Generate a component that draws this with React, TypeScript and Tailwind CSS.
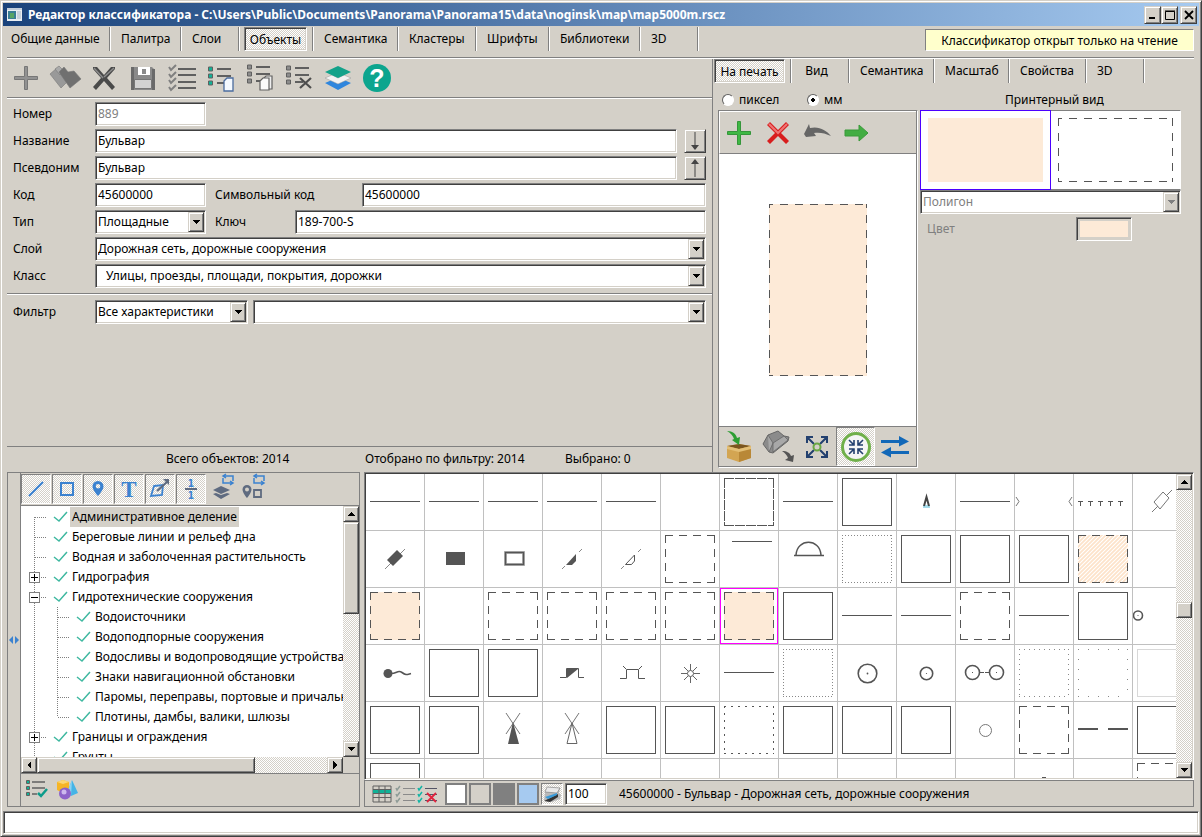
import { useState } from 'react';
import type { ReactNode } from 'react';
import clsx from 'clsx';

const SUNKEN =
  'border border-t-[#808080] border-l-[#808080] border-b-white border-r-white shadow-[inset_1px_1px_0_#404040,inset_-1px_-1px_0_#d4d0c8]';
const RAISED =
  'border border-t-[#d4d0c8] border-l-[#d4d0c8] border-b-[#404040] border-r-[#404040] shadow-[inset_1px_1px_0_#fff,inset_-1px_-1px_0_#808080] bg-[#d4d0c8]';
const HATCH = 'bg-[repeating-conic-gradient(#fff_0_25%,#d4d0c8_0_50%)] bg-[length:2px_2px]';
const PRESSED = `border border-t-[#808080] border-l-[#808080] border-b-white border-r-white ${HATCH}`;

/* ---------- shared controls ---------- */

function TextField({ id, value, className, disabled }: { id: string; value: string; className?: string; disabled?: boolean }) {
  return (
    <div className={clsx('h-6 bg-white flex', SUNKEN, className)}>
      <input
        id={id}
        type="text"
        defaultValue={value}
        disabled={disabled}
        className="w-full min-w-0 bg-transparent px-0.5 outline-none disabled:text-[#808080]"
      />
    </div>
  );
}

function Arrow({ dir, color = '#000' }: { dir: 'up' | 'down' | 'left' | 'right'; color?: string }) {
  const points = {
    up: '0,6 8,6 4,2',
    down: '0,2 8,2 4,6',
    left: '6,0 6,8 2,4',
    right: '2,0 2,8 6,4',
  };
  return (
    <svg width="8" height="8" viewBox="0 0 8 8" shapeRendering="crispEdges">
      <polygon points={points[dir]} fill={color} />
    </svg>
  );
}

type SelectProps = { id: string; label?: string; options: string[]; className?: string; disabled?: boolean; indent?: boolean };

function SelectField({ id, label, options, className, disabled, indent }: SelectProps) {
  return (
    <div className={clsx('relative h-6 bg-white flex', SUNKEN, className)}>
      <select
        id={id}
        aria-label={label}
        disabled={disabled}
        className={clsx(
          'appearance-none w-full min-w-0 bg-transparent pr-5 outline-none disabled:text-[#808080] disabled:opacity-100',
          indent ? 'pl-2.5' : 'pl-0.5'
        )}
      >
        {options.map((o) => (
          <option key={o}>{o}</option>
        ))}
      </select>
      <span className={clsx('absolute right-px top-px bottom-px w-4 flex items-center justify-center pointer-events-none', RAISED)}>
        <Arrow dir="down" color={disabled ? '#808080' : '#000'} />
      </span>
    </div>
  );
}

function ScrollButton({ dir }: { dir: 'up' | 'down' | 'left' | 'right' }) {
  return (
    <button type="button" aria-label={dir} className={clsx('w-4 h-4 shrink-0 flex items-center justify-center', RAISED)}>
      <Arrow dir={dir} />
    </button>
  );
}

function IconButton({ label, children, pressed, className }: { label: string; children: ReactNode; pressed?: boolean; className?: string }) {
  return (
    <button
      type="button"
      aria-label={label}
      className={clsx('flex items-center justify-center shrink-0', pressed && PRESSED, className)}
    >
      {children}
    </button>
  );
}

type Tab = { name: string; width: string; centered?: boolean };

function TabBar({ tabs, active, onSelect }: { tabs: Tab[]; active: string; onSelect: (t: string) => void }) {
  return (
    <div className="flex h-6">
      {tabs.map((tab, i) => (
        <div
          key={tab.name}
          className={clsx('flex shrink-0 border-r border-r-white shadow-[inset_-1px_0_0_#808080]', tab.width)}
        >
          {tab.name === active ? (
            <button
              type="button"
              className={clsx('mr-1.5 flex-1 text-center whitespace-nowrap pt-px', i > 0 ? 'ml-1' : 'ml-px', SUNKEN, HATCH)}
            >
              {tab.name}
            </button>
          ) : (
            <button
              type="button"
              onClick={() => onSelect(tab.name)}
              className={clsx('flex-1 whitespace-nowrap', tab.centered ? 'text-center pr-2' : 'text-left', !tab.centered && (i > 0 ? 'pl-2.5' : 'pl-2'))}
            >
              {tab.name}
            </button>
          )}
        </div>
      ))}
    </div>
  );
}

const Divider = () => <div className="h-0.5 shrink-0 border-t border-t-[#808080] border-b border-b-white" />;

/* ---------- toolbar icons ---------- */

const ListRows = ({ color }: { color: string }) => (
  <g>
    <path d="M13 5h14M13 12h14M13 19h8" stroke="#606060" strokeWidth="2" />
    <g fill={color} stroke="#606060" strokeWidth="1">
      <path d="M4.500 3h4v4h-4zM4.500 10h4v4h-4zM4.500 17h4v4h-4z" />
    </g>
  </g>
);

const mainIcons: { label: string; icon: ReactNode }[] = [
  {
    label: 'Добавить',
    icon: <path d="M14.500 4.500h3v10h10v3h-10v10h-3v-10h-10v-3h10z" fill="#929292" stroke="#777" />,
  },
  {
    label: 'Копировать',
    icon: (
      <g stroke="#777" strokeWidth=".6">
        <path d="M1 12l7-6 10 14-6 6z" fill="#999" />
        <path d="M6 7l4-3 4 4-3 5z" fill="#aaa" />
        <path d="M10 10l5-5 4 5 6-1 7 8-11 9z" fill="#707070" />
      </g>
    ),
  },
  {
    label: 'Удалить',
    icon: (
      <g>
        <path d="M5 5l4 0 7 8 7-8 4 0 0 2-8 9 8 9-3 3-8-9-8 9-3-3 8-9-8-9z" fill="#4a4a4a" />
        <path d="M6 6l9 10M26 6L16 15" stroke="#8b8b8b" strokeWidth="1.500" />
      </g>
    ),
  },
  {
    label: 'Сохранить',
    icon: (
      <g>
        <path d="M4 5h21l3 3v20H4z" fill="#8a8a8a" />
        <path d="M4 5h3v23H4zM25 7h3v21h-3z" fill="#6a6a6a" />
        <path d="M11 5h12v8H11z" fill="#fff" />
        <path d="M15 7h4v5h-4z" fill="#8a8a8a" />
        <path d="M7.500 17.500h17v9h-17z" fill="#d2d2d2" stroke="#777" />
      </g>
    ),
  },
  {
    label: 'Отметить все',
    icon: (
      <g fill="none">
        <path d="M12 7h18M12 13h18M12 20h18M12 26h18" stroke="#606060" strokeWidth="1.800" />
        <path d="M3 5l2 3 5-5M3 12l2 3 5-5M3 18l2 3 5-5M3 25l2 3 5-5" stroke="#808080" strokeWidth="2" />
      </g>
    ),
  },
  {
    label: 'Копировать список',
    icon: (
      <g transform="translate(-1 2)">
        <ListRows color="#10b297" />
        <path d="M20 17l3-3h6v13h-9z" fill="#f4f9ff" stroke="#4b6c9e" strokeWidth="1.300" />
      </g>
    ),
  },
  {
    label: 'Вставить список',
    icon: (
      <g transform="translate(-1 0)">
        <ListRows color="#8d8d8d" />
        <path d="M20 17l3-3h6v13h-9z" fill="#eee" stroke="#606060" strokeWidth="1.200" />
        <path d="M17 19l3-3h6v12h-9z" fill="#fafafa" stroke="#606060" strokeWidth="1.200" />
      </g>
    ),
  },
  {
    label: 'Удалить из списка',
    icon: (
      <g transform="translate(-1 1)">
        <ListRows color="#8d8d8d" />
        <path d="M18 15l11 10M29 15L18 25" stroke="#4d4d4d" strokeWidth="2.200" />
      </g>
    ),
  },
  {
    label: 'Слои',
    icon: (
      <g>
        <path d="M3 21l7-3 6 3 6-3 7 3-13 7z" fill="#2f86dd" />
        <path d="M3 16l7-3 6 3 6-3 7 3-13 6z" fill="#f2f2f2" stroke="#999" strokeWidth=".5" />
        <path d="M3 10l13-6 13 6-13 6z" fill="#13a28a" />
      </g>
    ),
  },
  {
    label: 'Справка',
    icon: (
      <g>
        <circle cx="16" cy="16" r="14" fill="#0ca58e" />
        <text x="16" y="25" textAnchor="middle" fill="#fff" fontSize="25" fontWeight="700" fontFamily="Liberation Sans, sans-serif">
          ?
        </text>
      </g>
    ),
  },
];

const previewTop: { label: string; icon: ReactNode }[] = [
  {
    label: 'Добавить элемент',
    icon: <path d="M14.500 4.500h3v10h10v3h-10v10h-3v-10h-10v-3h10z" fill="#3fb844" stroke="#35963a" />,
  },
  {
    label: 'Удалить элемент',
    icon: (
      <g>
        <path d="M5 8l3-3 8 8 8-8 3 3-8 8 8 8-3 3-8-8-8 8-3-3 8-8z" fill="#d81e1e" />
        <path d="M7 7l9 9 9-9" stroke="#ef7474" strokeWidth="2" fill="none" />
      </g>
    ),
  },
  {
    label: 'Отменить',
    icon: <path d="M3 17l5-10 1 4c9-2 16 2 21 8-6-3-12-4-17-3l2 3-10 1z" fill="#666" />,
  },
  {
    label: 'Вперёд',
    icon: <path d="M5 13h14V8l9 8-9 8v-5H5z" fill="#43ad43" stroke="#3a9a3a" />,
  },
];

const previewBottom: { label: string; icon: ReactNode; pressed?: boolean }[] = [
  {
    label: 'Загрузить',
    icon: (
      <g>
        <path d="M4 15l12-2 12 2v12l-12 4-12-4z" fill="#d3a552" />
        <path d="M4 15l12-2 12 2-12 3z" fill="#7a5520" />
        <path d="M16 18l12-3v12l-12 4z" fill="#b98837" />
        <path d="M4 15l12 3v3L4 18zM28 15l-12 3v3l12-3z" fill="#e3bf76" />
        <path d="M4 0c6 0 9 3 10 7l3-1-1 8-7-5 2-1C10 5 8 2 4 0z" fill="#2d9e33" />
      </g>
    ),
  },
  {
    label: 'Выгрузить',
    icon: (
      <g>
        <path d="M1 13l5-9 10-4 6 5 5 1-1 4-15 12-4-1z" fill="#8b8b8b" stroke="#666" />
        <path d="M6 4l5 8-4 9M11 12L22 5l4 4-15 12z" fill="#a8a8a8" stroke="#666" strokeWidth=".8" />
        <path d="M20 20c5 0 8 2 9 5l3-1-1 7-8-2 3-2c-1-3-3-5-6-7z" fill="#555" />
      </g>
    ),
  },
  {
    label: 'Развернуть',
    icon: (
      <g fill="none" stroke="#23406f" strokeWidth="2">
        <path d="M6 12V6h6M6 6l7 7M20 6h6v6M26 6l-7 7M6 20v6h6M6 26l7-7M20 26h6v-6M26 26l-7-7" />
        <circle cx="16" cy="16" r="3.500" stroke="#6aa743" strokeWidth="2" fill="#d4d0c8" />
      </g>
    ),
  },
  {
    label: 'Свернуть',
    pressed: true,
    icon: (
      <g fill="none">
        <circle cx="16" cy="16" r="13.500" stroke="#70b04a" strokeWidth="3" fill="#f5f5f5" />
        <path d="M9 14h5V9M14 14L9 9M18 9v5h5M18 14l5-5M9 18h5v5M14 18l-5 5M23 18h-5v5M18 18l5 5" stroke="#23406f" strokeWidth="1.600" />
      </g>
    ),
  },
  {
    label: 'Поменять местами',
    icon: <path d="M2 9h18V5l10 5.500-10 5V12H2zM30 20H12v-4L2 21.500l10 5V23h18z" fill="#1268b8" />,
  },
];

function Icon({ children, size = 32 }: { children: ReactNode; size?: number }) {
  return (
    <svg width={size} height={size} viewBox={`0 0 ${size} ${size}`} className="shrink-0 overflow-visible">
      {children}
    </svg>
  );
}

/* ---------- map symbols ---------- */

const INK = '#555';

function Frame({ dash, fill = 'none', color = INK }: { dash?: string; fill?: string; color?: string }) {
  return (
    <g>
      <rect x="4" y="4" width="50" height="48" fill={fill} />
      <path d="M4 4.500H54M4 51.500H54" stroke={color} strokeDasharray={dash} />
      <path d="M4.500 4V52M53.500 4V52" stroke={color} strokeDasharray={dash} />
    </g>
  );
}

const DASH = '8 6';

const symbols: Record<string, ReactNode> = {
  blank: null,
  line: <path d="M4 27.500H54" stroke={INK} />,
  box: <Frame />,
  dash: <Frame dash={DASH} />,
  dashTight: <Frame dash="10 1" />,
  dashPeach: <Frame dash={DASH} fill="#fdead7" />,
  dashHatch: <Frame dash={DASH} fill="url(#peach-hatch)" />,
  dots: <Frame dash="1 2" color="#888" />,
  dotsWide: <Frame dash="1 4" color="#888" />,
  dotsSparse: <Frame dash="1 9" color="#888" />,
  dotDash: <Frame dash="2 5" />,
  light: <Frame color="#d8d8d8" />,
  pencil: (
    <g>
      <path d="M26 31h7v3h-7z" fill="#a5dcec" />
      <path d="M27 32l2.500-9L32 32" fill="none" stroke="#444" strokeWidth="2" />
    </g>
  ),
  brackets: <path d="M1 23l3 4.500-3 4.500M57 23l-3 4.500 3 4.500" fill="none" stroke="#777" />,
  ticks: (
    <path
      d="M4 27.500h5M14 27.500h5M24 27.500h5M34 27.500h5M44 27.500h5M6.500 27v5M16.500 27v5M26.500 27v5M36.500 27v5M46.500 27v5"
      stroke={INK}
    />
  ),
  rhombus: <path d="M19 38l6-6M33 22l6-6M21 28l9-10 6 6-9 11z" fill="none" stroke="#777" />,
  rhombusFill: (
    <g>
      <path d="M19 38L39 18" stroke="#888" />
      <path d="M21 29l10-10 6 6-10 10z" fill={INK} />
    </g>
  ),
  rect: <path d="M21 21h19v13H21z" fill={INK} />,
  rectOutline: (
    <g fill="none">
      <path d="M21.500 21.500h18v12h-18z" stroke="#bbb" strokeWidth="3" />
      <path d="M21.500 21.500h18v12h-18z" stroke={INK} strokeWidth="1.500" />
    </g>
  ),
  wedgeFill: (
    <g>
      <path d="M19 38l3-3M36 21l3-3" stroke="#888" />
      <path d="M33 23v7l-4 4h-6z" fill={INK} />
    </g>
  ),
  wedge: (
    <g fill="none">
      <path d="M19 38l3-3M36 21l3-3" stroke="#888" />
      <path d="M32.500 24v6l-3 3.500h-6z" stroke={INK} />
    </g>
  ),
  topLine: <path d="M12 10.500H52" stroke={INK} />,
  dome: <path d="M15 24.500H45M17 24c1-17 24-17 25 0" fill="none" stroke={INK} strokeWidth="1.500" />,
  nodeLeft: (
    <g>
      <circle cx="5" cy="27.500" r="4.500" fill="none" stroke={INK} strokeWidth="1.600" />
      <circle cx="5" cy="27.500" r=".6" fill={INK} />
    </g>
  ),
  tadpole: (
    <g>
      <circle cx="22" cy="28.500" r="4.500" fill={INK} />
      <path d="M25 28.500c6 0 7-4 11-1s5 2 9 1" fill="none" stroke={INK} strokeWidth="1.600" />
    </g>
  ),
  stepLine: (
    <g>
      <path d="M17 32.500h6.500v-9h12v9H41" fill="none" stroke={INK} />
      <path d="M24 24h11l-11 9z" fill={INK} />
    </g>
  ),
  gate: <path d="M18 33.500h6.500v-9h12v9H43M21 21l3 3M40 21l-3 3" fill="none" stroke={INK} />,
  sun: (
    <g fill="none" stroke={INK}>
      <circle cx="29.500" cy="28.500" r="3" />
      <path d="M29.500 19v6M29.500 32v6M20 28.500h6M33 28.500h6M23 22l4 4M32 31l4 4M36 22l-4 4M27 31l-4 4" strokeWidth=".9" />
    </g>
  ),
  circle: (
    <g>
      <circle cx="29.500" cy="28.500" r="9.300" fill="none" stroke={INK} strokeWidth="1.600" />
      <circle cx="29.500" cy="28.500" r=".9" fill={INK} />
    </g>
  ),
  circleSmall: (
    <g>
      <circle cx="29.500" cy="28.500" r="6.200" fill="none" stroke={INK} strokeWidth="1.600" />
      <circle cx="29.500" cy="28.500" r=".6" fill={INK} />
    </g>
  ),
  pair: (
    <g fill="none" stroke={INK} strokeWidth="1.600">
      <circle cx="16.500" cy="27.500" r="7" />
      <circle cx="40.500" cy="27.500" r="7" />
      <path d="M24 27.500h4M29 27.500h4" strokeWidth="1" />
      <path d="M16 27.500h1M40 27.500h1" strokeWidth="1" />
    </g>
  ),
  circleThin: <circle cx="29.500" cy="28.500" r="6" fill="none" stroke="#777" />,
  millFill: (
    <g>
      <path d="M22 11l14 21M36 11L22 32" stroke="#666" strokeWidth=".9" />
      <path d="M29 20l6 22H24z" fill={INK} />
    </g>
  ),
  mill: (
    <g fill="none" stroke="#666">
      <path d="M22 11l14 21M36 11L22 32" strokeWidth=".9" />
      <path d="M29 21l5 20.500H24z" />
    </g>
  ),
  twoDashes: <path d="M4 27H24M34 27H54" stroke={INK} strokeWidth="2" />,
  tip: <path d="M27 18.500h4" stroke={INK} />,
};

const symbolRows: string[][] = [
  ['line', 'line', 'line', 'line', 'line', 'blank', 'dashTight', 'line', 'box', 'pencil', 'line', 'brackets', 'ticks', 'rhombus'],
  ['rhombusFill', 'rect', 'rectOutline', 'wedgeFill', 'wedge', 'dash', 'topLine', 'dome', 'dots', 'box', 'box', 'box', 'dashHatch', 'blank'],
  ['dashPeach', 'blank', 'dash', 'dash', 'dash', 'dash', 'dashPeach', 'box', 'line', 'line', 'dash', 'line', 'box', 'nodeLeft'],
  ['tadpole', 'box', 'box', 'stepLine', 'gate', 'sun', 'line', 'dots', 'circle', 'circleSmall', 'pair', 'dotsWide', 'dotsSparse', 'light'],
  ['box', 'box', 'millFill', 'mill', 'box', 'box', 'dotDash', 'box', 'box', 'box', 'circleThin', 'dash', 'twoDashes', 'box'],
  ['box', 'blank', 'blank', 'blank', 'blank', 'blank', 'blank', 'blank', 'blank', 'blank', 'blank', 'tip', 'blank', 'dash'],
];

function SymbolGrid() {
  const [selected, setSelected] = useState('2-6');
  return (
    <div className={clsx('flex flex-1 min-h-0 bg-white p-px', SUNKEN)}>
      <div className="flex-1 min-w-0 overflow-hidden">
        {symbolRows.map((row, r) => (
          <div key={r} className="flex">
            {row.map((name, c) => {
              const key = `${r}-${c}`;
              return (
                <button
                  key={key}
                  type="button"
                  aria-label={`Объект ${r + 1}-${c + 1}`}
                  onClick={() => setSelected(key)}
                  className={clsx(
                    'w-[59px] h-[57px] shrink-0 border-r border-b border-[#c0c0c0]',
                    key === selected && 'shadow-[inset_0_0_0_1px_#f0f]'
                  )}
                >
                  <svg width="58" height="56" viewBox="0 0 58 56">
                    {symbols[name]}
                  </svg>
                </button>
              );
            })}
          </div>
        ))}
      </div>
      <div className={clsx('w-4 shrink-0 flex flex-col', HATCH)}>
        <ScrollButton dir="up" />
        <div className="flex-7" />
        <div className={clsx('h-4', RAISED)} />
        <div className="flex-9" />
        <ScrollButton dir="down" />
      </div>
    </div>
  );
}

/* ---------- classifier tree ---------- */

type Node = { name: string; level: 0 | 1; box?: 'plus' | 'minus'; last?: boolean };

const tree: Node[] = [
  { name: 'Административное деление', level: 0 },
  { name: 'Береговые линии и рельеф дна', level: 0 },
  { name: 'Водная и заболоченная растительность', level: 0 },
  { name: 'Гидрография', level: 0, box: 'plus' },
  { name: 'Гидротехнические сооружения', level: 0, box: 'minus' },
  { name: 'Водоисточники', level: 1 },
  { name: 'Водоподпорные сооружения', level: 1 },
  { name: 'Водосливы и водопроводящие устройства', level: 1 },
  { name: 'Знаки навигационной обстановки', level: 1 },
  { name: 'Паромы, переправы, портовые и причальные', level: 1 },
  { name: 'Плотины, дамбы, валики, шлюзы', level: 1, last: true },
  { name: 'Границы и ограждения', level: 0, box: 'plus' },
  { name: 'Грунты', level: 0 },
];

function TreeRow({ node, first, active, onSelect }: { node: Node; first: boolean; active: boolean; onSelect: () => void }) {
  const dx = node.level * 23;
  return (
    <li className="flex h-5 items-center">
      <svg width={49 + dx} height="20" className="shrink-0">
        <g stroke="#808080" strokeDasharray="1 1" fill="none">
          <path d={first ? 'M13.500 10V20' : 'M13.500 0V20'} />
          {node.level === 1 && <path d={node.last ? 'M36.500 0V10' : 'M36.500 0V20'} />}
          <path d={`M${14 + dx} 10.500H${26 + dx}`} />
        </g>
        {node.box && (
          <g>
            <rect x="8.500" y="5.500" width="10" height="10" fill="#fff" stroke="#808080" />
            <path d={node.box === 'plus' ? 'M10 10.500h7M13.500 7v7' : 'M10 10.500h7'} stroke="#000" />
          </g>
        )}
        <path d={`M${33 + dx} 10l5 4 8-9`} fill="none" stroke="#3fb8a0" strokeWidth="1.500" />
      </svg>
      <button type="button" onClick={onSelect} className={clsx('h-5 px-0.5 whitespace-nowrap', active && 'bg-[#d4d0c8]')}>
        {node.name}
      </button>
    </li>
  );
}

const BLUE = '#3b82d0';
const SLATE = '#5f6b80';

const treeFilters: { label: string; icon: ReactNode }[] = [
  { label: 'Линейные', icon: <path d="M5 19L19 5" stroke={BLUE} strokeWidth="2" /> },
  { label: 'Площадные', icon: <path d="M6 6h12v12H6z" fill="none" stroke={BLUE} strokeWidth="2" /> },
  {
    label: 'Точечные',
    icon: (
      <path
        d="M12 4a5.500 5.500 0 0 0-5.500 5.500C6.500 13 12 19 12 19s5.500-6 5.500-9.500A5.500 5.500 0 0 0 12 4zm0 3a2.300 2.300 0 1 1 0 4.600A2.300 2.300 0 0 1 12 7z"
        fill={BLUE}
      />
    ),
  },
  {
    label: 'Подписи',
    icon: (
      <text x="12" y="20" textAnchor="middle" fill={BLUE} fontSize="23" fontWeight="700" fontFamily="Liberation Serif, serif">
        T
      </text>
    ),
  },
  {
    label: 'Векторные',
    icon: (
      <g fill="none" stroke={BLUE} strokeWidth="1.800">
        <path d="M6 9l9-1-1 10-11 1z" />
        <path d="M9 14L20 4" stroke={SLATE} strokeWidth="2.200" />
        <path d="M15 2h6v6z" fill={SLATE} stroke="none" />
      </g>
    ),
  },
  {
    label: 'Шаблоны',
    icon: (
      <g fill={BLUE} fontSize="10" fontWeight="700" fontFamily="DejaVu Sans Condensed, sans-serif" textAnchor="middle">
        <path d="M6 12h12" stroke={SLATE} strokeWidth="2" />
        <text x="12" y="10">1</text>
        <text x="12" y="22">1</text>
      </g>
    ),
  },
];

const SwapMark = () => (
  <path d="M13 2h9v5M21 9h-9V4M15 0l-3 2 3 2M19 7l3 2-3 2" fill="none" stroke={BLUE} strokeWidth="1.500" transform="translate(1 -3)" />
);

function TreePanel() {
  const [active, setActive] = useState(tree[0].name);
  return (
    <div className="flex w-[353px] shrink-0 border border-[#808080]">
      <button type="button" aria-label="Свернуть панель" className="w-3 shrink-0 flex items-center justify-center">
        <svg width="10" height="8">
          <path d="M4 0v8L0 4zM6 0v8l4-4z" fill={BLUE} />
        </svg>
      </button>
      <div className="flex flex-col flex-1 min-w-0 border-l border-l-[#808080]">
        <div className="flex gap-px h-[33px] pt-px shrink-0 border-b border-b-[#808080]">
          {treeFilters.map((f) => (
            <IconButton key={f.label} label={f.label} pressed className="w-[30px] h-[30px]">
              <Icon size={24}>{f.icon}</Icon>
            </IconButton>
          ))}
          <IconButton label="Слои" className="w-[30px] h-[30px]">
            <Icon size={24}>
              <SwapMark />
              <path d="M3 13l8-4 9 4-9 4z" fill={SLATE} />
              <path d="M3 17l3-1 5 2 6-2 3 1-9 5z" fill={SLATE} />
            </Icon>
          </IconButton>
          <IconButton label="Объекты" className="w-[30px] h-[30px]">
            <Icon size={24}>
              <SwapMark />
              <path d="M6 8a4.500 4.500 0 0 0-4.500 4.500C1.500 16 6 21 6 21s4.500-5 4.500-8.500A4.500 4.500 0 0 0 6 8zm0 2.500a2 2 0 1 1 0 4 2 2 0 0 1 0-4z" fill={SLATE} />
              <path d="M13 13h7v7h-7z" fill="none" stroke={SLATE} strokeWidth="1.800" />
            </Icon>
          </IconButton>
        </div>
        <div className="flex flex-1 min-h-0 bg-white">
          <ul className="flex-1 min-w-0 overflow-hidden pt-px">
            {tree.map((node, i) => (
              <TreeRow key={node.name} node={node} first={i === 0} active={node.name === active} onSelect={() => setActive(node.name)} />
            ))}
          </ul>
          <div className={clsx('w-4 shrink-0 flex flex-col', HATCH)}>
            <ScrollButton dir="up" />
            <div className={clsx('flex-5', RAISED)} />
            <div className="flex-7" />
            <ScrollButton dir="down" />
          </div>
        </div>
        <div className="flex h-4 shrink-0">
          <div className={clsx('flex flex-1', HATCH)}>
            <ScrollButton dir="left" />
            <div className={clsx('flex-3', RAISED)} />
            <div className="flex-1" />
            <ScrollButton dir="right" />
          </div>
          <div className="w-4" />
        </div>
        <div className="flex h-[33px] shrink-0 items-center gap-1 px-1 border-t border-t-[#808080]">
          <IconButton label="Отметить" className="w-6">
            <Icon size={24}>
              <path d="M7 4h13M7 10h13M7 16h5" stroke="#606060" strokeWidth="1.600" />
              <path d="M1.500 2.500h3v3h-3zM1.500 8.500h3v3h-3zM1.500 14.500h3v3h-3z" fill="#10b297" stroke="#606060" />
              <path d="M13 15l3 3 6-7" fill="none" stroke="#0d9c8a" strokeWidth="2.500" />
            </Icon>
          </IconButton>
          <IconButton label="Виды объектов" className="w-7">
            <Icon size={24}>
              <path d="M2 4l6-2 6 2v9l-6 2-6-3z" fill="#f6b526" />
              <path d="M2 4l6-2 6 2-6 2z" fill="#fbd774" />
              <path d="M17 2l6 13-7 3-4-3z" fill="#45b4e6" />
              <path d="M17 2l-1 16-4-3z" fill="#8bd3f2" />
              <circle cx="10" cy="15.500" r="6" fill="#8d62c9" />
              <circle cx="9" cy="14" r="2.500" fill="#cdb8ee" />
            </Icon>
          </IconButton>
        </div>
      </div>
    </div>
  );
}

/* ---------- object form ---------- */

function Label({ htmlFor, children, className = 'w-[82px]' }: { htmlFor: string; children: ReactNode; className?: string }) {
  return (
    <label htmlFor={htmlFor} className={clsx('shrink-0', className)}>
      {children}
    </label>
  );
}

function MoveButton({ down }: { down?: boolean }) {
  return (
    <button type="button" aria-label={down ? 'Вниз' : 'Вверх'} className={clsx('ml-[7px] w-[22px] h-6 flex items-center justify-center shrink-0', RAISED)}>
      <svg width="8" height="18" className={down ? 'rotate-180' : ''}>
        <path d="M4 18V4" stroke="#444" />
        <path d="M0 5h8L4 0z" fill="#444" />
      </svg>
    </button>
  );
}

function ObjectForm() {
  return (
    <div className="flex flex-col flex-1 min-w-0 border-r border-r-[#808080]">
      <div className="flex h-[38px] shrink-0 items-center gap-[7px] pl-[3px]">
        {mainIcons.map((i) => (
          <IconButton key={i.label} label={i.label}>
            <Icon>{i.icon}</Icon>
          </IconButton>
        ))}
      </div>
      <Divider />
      <div className="flex flex-col gap-[3px] pl-1.5 pr-1.5 pt-[3px] pb-[5px]">
        <div className="flex items-center">
          <Label htmlFor="number">Номер</Label>
          <TextField id="number" value="889" disabled className="w-[111px]" />
        </div>
        <div className="flex items-center">
          <Label htmlFor="title">Название</Label>
          <TextField id="title" value="Бульвар" className="flex-1" />
          <MoveButton down />
        </div>
        <div className="flex items-center">
          <Label htmlFor="alias">Псевдоним</Label>
          <TextField id="alias" value="Бульвар" className="flex-1" />
          <MoveButton />
        </div>
        <div className="flex items-center">
          <Label htmlFor="code">Код</Label>
          <TextField id="code" value="45600000" className="w-[111px]" />
          <Label htmlFor="symcode" className="w-[156px] pl-[9px]">Символьный код</Label>
          <TextField id="symcode" value="45600000" className="flex-1" />
        </div>
        <div className="flex items-center">
          <Label htmlFor="kind">Тип</Label>
          <SelectField id="kind" options={['Площадные', 'Линейные']} className="w-[111px]" />
          <Label htmlFor="key" className="w-[89px] pl-[9px]">Ключ</Label>
          <TextField id="key" value="189-700-S" className="flex-1" />
        </div>
        <div className="flex items-center">
          <Label htmlFor="layer">Слой</Label>
          <SelectField id="layer" options={['Дорожная сеть, дорожные сооружения']} className="flex-1" />
        </div>
        <div className="flex items-center">
          <Label htmlFor="class">Класс</Label>
          <SelectField id="class" options={['Улицы, проезды, площади, покрытия, дорожки']} className="flex-1" indent />
        </div>
      </div>
      <Divider />
      <div className="flex items-center px-1.5 pt-[5px]">
        <Label htmlFor="filter">Фильтр</Label>
        <SelectField id="filter" options={['Все характеристики']} className="w-[153px]" />
        <SelectField id="filter-value" label="Значение фильтра" options={['']} className="flex-1 ml-[5px]" />
      </div>
      <div className="mt-auto flex h-[26px] items-center border-t border-t-[#808080] pb-0.5 pl-[159px] whitespace-nowrap">
        <span className="w-[199px]">Всего объектов: 2014</span>
        <span className="w-[200px]">Отобрано по фильтру: 2014</span>
        <span>Выбрано: 0</span>
      </div>
    </div>
  );
}

/* ---------- symbol view ---------- */

const viewTabs: Tab[] = [
  { name: 'На печать', width: 'w-[79px]' },
  { name: 'Вид', width: 'w-[58px]', centered: true },
  { name: 'Семантика', width: 'w-[85px]' },
  { name: 'Масштаб', width: 'w-[75px]' },
  { name: 'Свойства', width: 'w-[77px]' },
  { name: '3D', width: 'w-[58px]' },
];

function Radio({ id, label, checked, onChange }: { id: string; label: string; checked: boolean; onChange: () => void }) {
  return (
    <label htmlFor={id} className="flex items-center gap-[5px] w-[85px]">
      <input
        id={id}
        type="radio"
        name="units"
        checked={checked}
        onChange={onChange}
        className="appearance-none w-3 h-3 rounded-full bg-white border border-t-[#606060] border-l-[#606060] border-b-white border-r-white checked:bg-[radial-gradient(#000_0_2px,#fff_2px)]"
      />
      {label}
    </label>
  );
}

function SymbolView() {
  const [tab, setTab] = useState('На печать');
  const [units, setUnits] = useState('mm');
  return (
    <div className="w-[481px] shrink-0 pb-1">
      <TabBar tabs={viewTabs} active={tab} onSelect={setTab} />
      <div className="flex h-[27px] items-center pt-1.5 pl-[9px]">
        <Radio id="px" label="пиксел" checked={units === 'px'} onChange={() => setUnits('px')} />
        <Radio id="mm" label="мм" checked={units === 'mm'} onChange={() => setUnits('mm')} />
        <span className="flex-1 pl-[113px]">Принтерный вид</span>
      </div>
      <div className="flex gap-0.5 pl-[5px]">
        <div className="w-[200px] border border-[#808080] border-b-white border-r-white">
          <div className="border-r border-r-[#808080]">
            <div className="flex h-[43px] items-center gap-[7px] pl-[3px] border-t border-l border-white border-b border-b-[#808080]">
              {previewTop.map((i) => (
                <IconButton key={i.label} label={i.label}>
                  <Icon>{i.icon}</Icon>
                </IconButton>
              ))}
            </div>
            <div className="flex h-[272px] items-center justify-center bg-white">
              <svg width="98" height="172">
                <rect width="98" height="172" fill="#fdead7" />
                <path d="M0 .5H98M0 171.500H98M.5 0V172M97.500 0V172" stroke={INK} strokeDasharray="8 7" strokeDashoffset="4" />
              </svg>
            </div>
            <div className="flex h-[41px] items-center border-t border-b border-[#808080]">
              {previewBottom.map((i) => (
                <IconButton key={i.label} label={i.label} pressed={i.pressed} className="w-[39px] h-[39px]">
                  <Icon>{i.icon}</Icon>
                </IconButton>
              ))}
            </div>
          </div>
        </div>
        <div className="w-[261px]">
          <div className="flex h-20 bg-white border border-[#808080] border-r-white">
            <button type="button" aria-label="Полигон" className="relative w-[129px] p-[7px] shadow-[0_0_0_1px_#4b00ff]">
              <span className="block h-full bg-[#fdead7]" />
            </button>
            <button type="button" aria-label="Контур" className="flex-1 flex items-center justify-center">
              <svg width="115" height="64">
                <path d="M0 .5H115M0 63.500H115" stroke={INK} strokeDasharray="8 7" strokeDashoffset="4" />
                <path d="M.5 0V64M114.500 0V64" stroke={INK} strokeDasharray="8 7" />
              </svg>
            </button>
          </div>
          <SelectField id="shape" label="Вид элемента" options={['Полигон']} disabled />
          <div className="flex items-center pt-[3px] pl-[7px] text-[#808080]">
            <Label htmlFor="fill" className="w-[149px]">Цвет</Label>
            <button id="fill" type="button" className={clsx('w-14 h-6 p-[3px]', SUNKEN)}>
              <span className="block h-full bg-[#fdead7]" />
            </button>
          </div>
        </div>
      </div>
    </div>
  );
}

/* ---------- window ---------- */

const mainTabs: Tab[] = [
  { name: 'Общие данные', width: 'w-[108px]' },
  { name: 'Палитра', width: 'w-[71px]' },
  { name: 'Слои', width: 'w-[58px]' },
  { name: 'Объекты', width: 'w-[74px]' },
  { name: 'Семантика', width: 'w-[85px]' },
  { name: 'Кластеры', width: 'w-[78px]' },
  { name: 'Шрифты', width: 'w-[73px]' },
  { name: 'Библиотеки', width: 'w-[91px]' },
  { name: '3D', width: 'w-[58px]' },
];

function TitleBar() {
  const caption = clsx('w-[17px] h-[18px] flex items-center justify-center', RAISED);
  return (
    <header className="flex h-[23px] shrink-0 items-center bg-linear-to-r from-[#1a437b] to-[#a6caf0] pl-1 pr-0.5">
      <svg width="15" height="14">
        <path d="M0 0h15v13H0z" fill="#e9eef2" />
        <path d="M1 3h8v8H1z" fill="#3a7f94" />
        <path d="M3 5h4v5H3z" fill="#57a565" />
        <path d="M10 3h4v8h-4z" fill="#c8d2da" />
        <path d="M0 1h15" stroke="#9db0c4" />
      </svg>
      <h1 className="ml-1.5 flex-1 truncate text-white text-[12px] font-bold">
        Редактор классификатора - C:\Users\Public\Documents\Panorama\Panorama15\data\noginsk\map\map5000m.rscz
      </h1>
      <button type="button" aria-label="Свернуть" className={caption}>
        <svg width="10" height="10"><path d="M1 8h6" stroke="#000" strokeWidth="2" /></svg>
      </button>
      <button type="button" aria-label="Развернуть" className={caption}>
        <svg width="10" height="10"><path d="M.5 1.500h9v8h-9z M0 1h10" fill="none" stroke="#000" /></svg>
      </button>
      <button type="button" aria-label="Закрыть" className={clsx(caption, 'ml-0.5')}>
        <svg width="10" height="10"><path d="M1 1l8 8M9 1L1 9" stroke="#000" strokeWidth="1.800" /></svg>
      </button>
    </header>
  );
}

function GridFooter() {
  const swatch = 'w-[22px] h-[22px] border-2 border-[#808080]';
  return (
    <div className="flex h-[27px] shrink-0 items-center border border-[#808080] pl-[5px]">
      <IconButton label="Таблица" className="w-6">
        <Icon size={20}>
          <path d="M1 2h18v16H1z" fill="none" stroke="#606060" />
          <path d="M1 6h18v3H1z" fill="#10b297" />
          <path d="M1 5.500h18M1 9.500h18M1 13.500h18M7 2v16M13 2v16" stroke="#606060" />
        </Icon>
      </IconButton>
      <IconButton label="Отметить все" className="w-[22px]">
        <Icon size={20}>
          <path d="M8 4.500h12M8 10.500h12M8 16.500h12" stroke="#8a8a8a" />
          <path d="M1 4l1 2 3-4M1 10l1 2 3-4M1 16l1 2 3-4" fill="none" stroke="#8f9c97" strokeWidth="1.500" />
        </Icon>
      </IconButton>
      <IconButton label="Снять отметки" className="w-[22px]">
        <Icon size={20}>
          <path d="M8 4.500h12M8 10.500h12M8 16.500h12" stroke="#556" />
          <path d="M1 4l1 2 3-4M1 10l1 2 3-4M1 16l1 2 3-4" fill="none" stroke="#12b5a5" strokeWidth="1.500" />
          <path d="M10 9l9 9M19 9l-9 9" stroke="#e0233e" strokeWidth="1.800" />
        </Icon>
      </IconButton>
      <div className="flex gap-0.5 ml-[7px]">
        <button type="button" aria-label="Белый фон" className={clsx(swatch, 'bg-white')} />
        <button type="button" aria-label="Серый фон" className={swatch} />
        <button type="button" aria-label="Тёмный фон" className={clsx(swatch, 'bg-[#808080]')} />
        <button type="button" aria-label="Голубой фон" className={clsx(swatch, 'bg-[#a6caf0]')} />
        <IconButton label="Печать" pressed className="w-[22px] h-[22px]">
          <Icon size={20}>
            <path d="M4 5l14-1-1 5 2 2-1 4-8 3-8-2 1-7z" fill="#b9b9b9" />
            <path d="M5 3l13 1-3 5-12-1z" fill="#e9e9e9" stroke="#777" strokeWidth=".6" />
            <path d="M2 17l14-7v3L8 18z" fill="#333" />
            <path d="M3 13l12-4v2l-9 4z" fill="#3a9bd9" />
          </Icon>
        </IconButton>
      </div>
      <div className={clsx('ml-0.5 flex w-[42px] h-[22px] bg-white', SUNKEN)}>
        <input aria-label="Масштаб" type="text" defaultValue="100" className="w-full bg-transparent px-0.5 outline-none" />
      </div>
      <span className="ml-3 truncate">45600000 - Бульвар - Дорожная сеть, дорожные сооружения</span>
    </div>
  );
}

export default function App() {
  const [tab, setTab] = useState('Объекты');
  return (
    <div className="flex flex-col h-screen overflow-hidden bg-[#d4d0c8] p-0.5 border border-t-[#d4d0c8] border-l-[#d4d0c8] border-b-[#404040] border-r-[#404040] shadow-[inset_1px_1px_0_#fff,inset_-1px_-1px_0_#808080] font-['Noto_Sans','DejaVu_Sans',sans-serif] text-[12px] leading-4 text-black">
      <svg width="0" height="0" className="absolute">
        <defs>
          <pattern id="peach-hatch" width="4" height="4" patternUnits="userSpaceOnUse">
            <path d="M-1 1l2-2M0 4l4-4M3 5l2-2" stroke="#fde3ca" strokeWidth="1.800" />
          </pattern>
        </defs>
      </svg>
      <TitleBar />
      <div className="flex shrink-0 items-start justify-between pt-px pr-[5px] h-[31px]">
        <TabBar tabs={mainTabs} active={tab} onSelect={setTab} />
        <div className="mt-0.5 w-[269px] h-[22px] border border-t-[#808080] border-l-[#808080] border-b-white border-r-white bg-[#ffffcc] text-center leading-5 pt-px">
          Классификатор открыт только на чтение
        </div>
      </div>
      <main className="flex flex-col flex-1 min-h-0 pl-1 pr-[5px] pb-1">
        <Divider />
        <div className="flex shrink-0">
          <ObjectForm />
          <SymbolView />
        </div>
        <div className="flex flex-1 min-h-0 gap-1">
          <TreePanel />
          <div className="flex flex-col flex-1 min-w-0">
            <SymbolGrid />
            <GridFooter />
          </div>
        </div>
      </main>
      <div className={clsx('flex h-[23px] shrink-0 bg-white', SUNKEN)}>
        <input aria-label="Сообщение" type="text" readOnly className="w-full bg-transparent px-1 outline-none" />
      </div>
    </div>
  );
}
